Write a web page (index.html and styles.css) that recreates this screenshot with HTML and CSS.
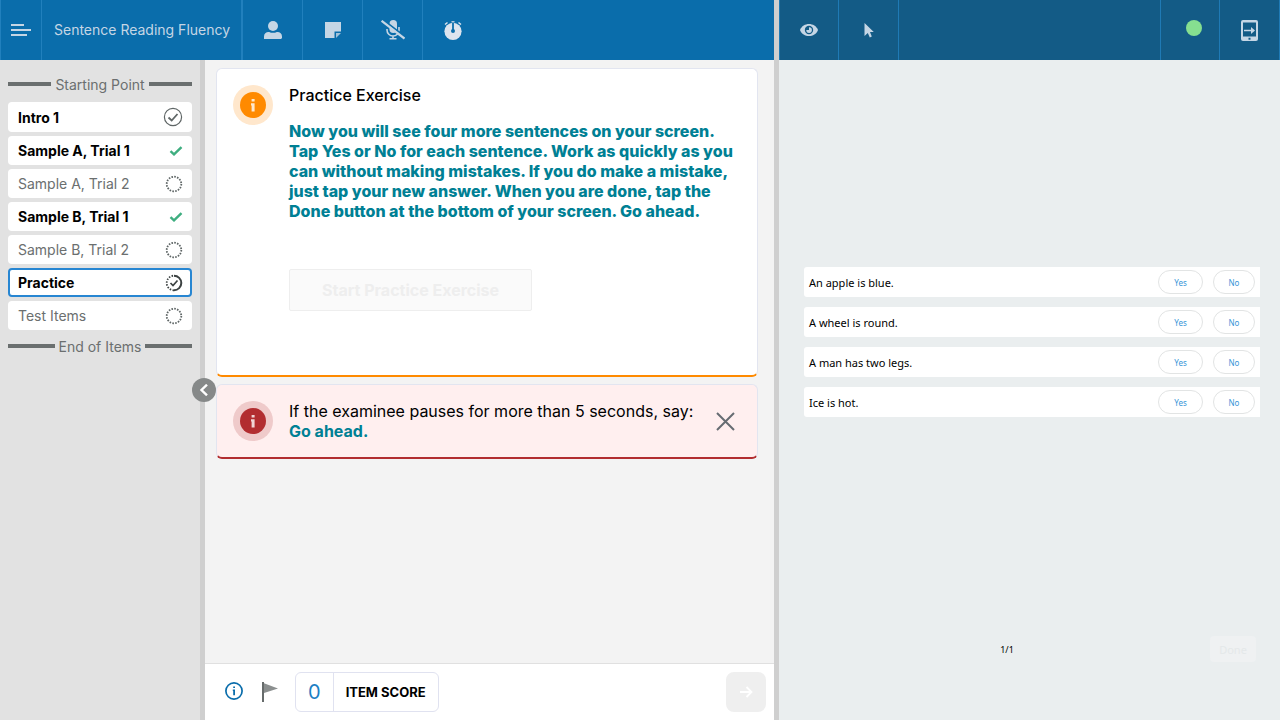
FILE: index.html
```html
<!DOCTYPE html>
<html lang="en">
<head>
<meta charset="utf-8">
<title>Sentence Reading Fluency</title>
<link rel="stylesheet" href="styles.css">
</head>
<body>
<svg class="defs" aria-hidden="true">
  <symbol id="todo" viewBox="0 0 18 18"><circle cx="9" cy="9" r="7.3" fill="none" stroke="#5f6666" stroke-width="1.8" stroke-dasharray="1.6 1.267"/></symbol>
  <symbol id="check" viewBox="0 0 14 10"><path d="M1.5 5.2 5 8.4 12.5 1.2" fill="none" stroke="#3fae80" stroke-width="2.4"/></symbol>
  <symbol id="info" viewBox="0 0 26 26"><circle cx="13" cy="13" r="13" fill="currentColor"/><path d="M11.6 7h3v2.6h-3zM11 11.2h3.6v8.4h-3v-6.2H11z" fill="#fff" opacity=".8"/></symbol>
</svg>
<div class="app">
  <section class="examiner">
    <header class="topbar">
      <button class="menu" aria-label="Menu"><svg width="20" height="12" viewBox="0 0 20 12"><path d="M0 1h13M0 6h20M0 11h16" stroke="currentColor" stroke-width="2"/></svg></button>
      <h1>Sentence Reading Fluency</h1>
      <button class="tool" aria-label="Examinee"><svg width="18" height="18" viewBox="0 0 18 18" fill="currentColor"><circle cx="9" cy="5" r="5"/><path d="M0 18v-2.5C0 12.500 2 11 4.500 11c1 0 2 .8 4.500.8s3.500-.8 4.500-.8c2.500 0 4.500 1.500 4.500 4.500V17l-1 1z"/></svg></button>
      <button class="tool" aria-label="Notes"><svg width="16" height="16" viewBox="0 0 16 16" fill="currentColor"><path d="M0 0h16v9.500h-6.500V16H0z"/><path d="M11 16v-5h5z" opacity=".8"/></svg></button>
      <button class="tool" aria-label="Microphone off"><svg width="24" height="20" viewBox="0 0 24 20" fill="none" stroke="currentColor"><rect x="8.500" y="0" width="7.500" height="13" rx="3.750" fill="currentColor" stroke="none"/><path d="M6 9v1a6 6 0 0 0 12 0V7M12 15.500V19M8.500 18.800h7" stroke-width="1.600"/><path d="M1.500-.5 24 16.800" stroke="#0a6dab" stroke-width="2"/><path d="M.6.8 23.500 18.600" stroke-width="2.200"/></svg></button>
      <button class="tool last" aria-label="Timer"><svg class="timer" width="18" height="19" viewBox="0 0 18 19"><circle cx="9" cy="10.300" r="8.600" fill="currentColor"/><path d="M1 3.500 3.500 1.500M17 3.500 14.500 1.500" stroke="currentColor" stroke-width="1.500"/><path d="M9 1v9" stroke="#0a6dab" stroke-width="1.800"/><path d="M7.500.8h3" stroke="currentColor" stroke-width="1.200"/><circle cx="9" cy="10" r="2" fill="#0a6dab"/></svg></button>
    </header>
    <div class="work">
      <nav class="sidebar" aria-label="Items">
        <div class="rule">Starting Point</div>
        <ul class="items">
          <li><button class="item strong">Intro 1<svg width="20" height="20" viewBox="0 0 20 20" fill="none" stroke="#5f6666"><circle cx="10" cy="10" r="8.600" stroke-width="1.200"/><path d="M5.500 10.500 8.700 13.500 14.500 7" stroke-width="1.800"/></svg></button></li>
          <li><button class="item strong">Sample A, Trial 1<svg width="14" height="10"><use href="#check"/></svg></button></li>
          <li><button class="item">Sample A, Trial 2<svg width="18" height="18"><use href="#todo"/></svg></button></li>
          <li><button class="item strong">Sample B, Trial 1<svg width="14" height="10"><use href="#check"/></svg></button></li>
          <li><button class="item">Sample B, Trial 2<svg width="18" height="18"><use href="#todo"/></svg></button></li>
          <li><button class="item strong current" aria-current="step">Practice<svg width="18" height="18" viewBox="0 0 18 18" fill="none" stroke="#3c4242"><path d="M9 16.300A7.300 7.300 0 0 1 9 1.700" stroke-width="1.800" stroke-dasharray="1.500 1.400"/><path d="M9 1.700A7.300 7.300 0 0 1 9 16.300" stroke-width="2"/><path d="M5.500 9 8 11.500 12.500 6.500" stroke-width="1.700"/></svg></button></li>
          <li><button class="item">Test Items<svg width="18" height="18"><use href="#todo"/></svg></button></li>
        </ul>
        <div class="rule">End of Items</div>
        <button class="collapse" aria-label="Collapse sidebar"><svg width="8" height="12" viewBox="0 0 8 12"><path d="M7 .7 1.500 6 7 11.300" fill="none" stroke="#fff" stroke-width="2.400"/></svg></button>
      </nav>
      <div class="content">
        <main class="cards">
          <article class="card prompt">
            <span class="badge"><svg width="26" height="26"><use href="#info"/></svg></span>
            <div class="body">
              <h2>Practice Exercise</h2>
              <p class="say">Now you will see four more sentences on your screen. Tap Yes or No for each sentence. Work as quickly as you can without making mistakes. If you do make a mistake, just tap your new answer. When you are done, tap the Done button at the bottom of your screen. Go ahead.</p>
              <button class="start" disabled>Start Practice Exercise</button>
            </div>
          </article>
          <article class="card alert">
            <span class="badge"><svg width="26" height="26"><use href="#info"/></svg></span>
            <div class="body">
              <p>If the examinee pauses for more than 5 seconds, say:</p>
              <p class="say">Go ahead.</p>
            </div>
            <button class="close" aria-label="Dismiss"><svg width="19" height="19" viewBox="0 0 19 19"><path d="M1 1l17 17M18 1 1 18" stroke="#666c72" stroke-width="2"/></svg></button>
          </article>
        </main>
        <footer class="bottombar">
          <button class="icon" aria-label="Information"><svg width="18" height="18" viewBox="0 0 18 18"><circle cx="9" cy="9" r="8.100" fill="none" stroke="#0a6dab" stroke-width="1.700"/><path d="M8.200 4.500h1.800v1.600H8.200zM7.800 7.500H10v5.700H8.200V9h-.4z" fill="#0a6dab"/></svg></button>
          <button class="icon flag" aria-label="Flag"><svg width="16" height="20" viewBox="0 0 16 20"><path d="M1 0v20" stroke="#666b6b" stroke-width="2"/><path d="M2 1.300 16 6.500 2 11z" fill="#8b8f8f"/></svg></button>
          <div class="score"><output>0</output><span>ITEM SCORE</span></div>
          <button class="next" aria-label="Next" disabled><svg width="13" height="12" viewBox="0 0 13 12"><path d="M0 6h11.500M6.500 1l5 5-5 5" fill="none" stroke="#fff" stroke-width="1.800"/></svg></button>
        </footer>
      </div>
    </div>
  </section>
  <div class="divider"></div>
  <section class="examinee">
    <header class="topbar dark">
      <button class="tool" aria-label="View"><svg width="18" height="12" viewBox="0 0 18 12"><path d="M0 6C3-2 15-2 18 6 15 14 3 14 0 6z" fill="currentColor"/><circle cx="9" cy="6" r="4.200" fill="#135b86"/><path d="M9 6V3.300A2.800 2.800 0 1 1 6.300 6z" fill="currentColor"/></svg></button>
      <button class="tool" aria-label="Pointer"><svg width="10" height="15" viewBox="0 0 10 15"><path d="M.5 0 9.800 9H6l1.800 4.500-2 1L3.800 10 .5 13z" fill="currentColor"/></svg></button>
      <span class="status"><i class="dot"></i></span>
      <button class="tool" aria-label="Send to device"><svg width="17" height="21" viewBox="0 0 17 21"><path fill-rule="evenodd" d="M2 0h13q2 0 2 2v17q0 2-2 2H2q-2 0-2-2V2Q0 0 2 0zM2 2.500v14h13v-14zM7.500 17.700v2h2v-2z" fill="currentColor"/><path d="M3 10.500h8" stroke="currentColor" stroke-width="1.500"/><path d="M10 7l4 3.500-4 3.500z" fill="currentColor"/></svg></button>
    </header>
    <div class="stage">
      <ul class="questions">
        <li>An apple is blue.<button class="yes">Yes</button><button>No</button></li>
        <li>A wheel is round.<button class="yes">Yes</button><button>No</button></li>
        <li>A man has two legs.<button class="yes">Yes</button><button>No</button></li>
        <li>Ice is hot.<button class="yes">Yes</button><button>No</button></li>
      </ul>
      <div class="pager"><span>1/1</span><button class="done" disabled>Done</button></div>
    </div>
  </section>
</div>
</body>
</html>
```
FILE: styles.css
```css
* { box-sizing: border-box; }
body { margin: 0; font-family: Inter, "Liberation Sans", sans-serif; color: #000; }
button { font: inherit; color: inherit; background: none; border: 0; padding: 0; }
h1, h2, p, ul { margin: 0; padding: 0; font-weight: 400; list-style: none; }
svg { display: block; flex: none; }
.defs { position: absolute; width: 0; height: 0; }

.app { display: grid; grid-template-columns: minmax(0, 774fr) 5px minmax(0, 501fr); min-height: 100vh; }
.divider { background: #cfcfcf; }
.examiner, .examinee { display: flex; flex-direction: column; }

.topbar { display: flex; height: 60px; background: #0a6dab; color: #c5d6e5; }
.topbar button { display: grid; place-items: center; border-right: 1px solid #2180bd; }
.topbar .menu { width: 42px; border-left: 1px solid #2180bd; }
.topbar h1 { display: flex; align-items: center; padding: 0 11px 0 12px; font-size: 14px; line-height: 20px; white-space: nowrap; border-right: 2px solid #2180bd; }
.topbar .tool { width: 60px; }
.topbar .last { border-right: 0; }
.timer { color: #dce4ee; }
.dark { background: #135b86; border-left: 1px solid #1f7ab5; }
.dark .tool { border-color: #1f7ab5; }
.dark .tool:first-child { width: 59px; }
.status { display: grid; place-items: center; width: 60px; margin-left: auto; padding: 0 0 4px 8px; border: solid #1f7ab5; border-width: 0 1px; }
.dot { width: 16px; height: 16px; border-radius: 50%; background: #86df90; }

.work { display: flex; flex: 1; }
.sidebar { position: relative; width: 205px; flex: none; padding: 12px 8px 0; background: #e2e2e2; border-right: 5px solid #cfcfcf; font-size: 14px; line-height: 19px; color: #6b6f6f; }
.rule { display: flex; align-items: center; gap: 4px; height: 24px; }
.rule::before, .rule::after { content: ""; flex: 1; height: 4px; background: #6a6f6f; }
.items { display: flex; flex-direction: column; gap: 4px; margin: 6px 0 4px; }
.item { display: flex; align-items: center; justify-content: space-between; width: 100%; min-height: 29px; padding: 5px 9px 5px 10px; background: #fff; border-radius: 4px; }
.strong { font-weight: 700; color: #000; }
.current { padding: 3px 7px 3px 8px; border: 2px solid #2786d2; }
.collapse { position: absolute; top: 318px; right: -16px; display: grid; place-items: center; width: 24px; height: 24px; border-radius: 50%; background: #868989; }

.content { display: flex; flex-direction: column; flex: 1; min-width: 0; background: #f3f3f3; }
.cards { display: flex; flex-direction: column; gap: 7px; flex: 1; padding: 8px 16px 8px 11px; font-size: 16px; line-height: 20px; }
.card { display: flex; gap: 16px; padding: 16px; background: #fff; border: 1px solid #e2e5f0; border-bottom-width: 2px; border-radius: 6px; }
.badge { display: grid; place-items: center; flex: none; width: 40px; height: 40px; border-radius: 50%; }
.body { flex: 1; }
.prompt { padding-bottom: 64px; border-bottom-color: #ff8a00; }
.prompt .badge { color: #ff8a00; background: #ffe7cc; }
.prompt h2 { font-size: 16px; font-weight: 500; }
.say { font-weight: 700; color: #008094; }
.prompt .say { margin-top: 16px; font-weight: 800; }
.start { margin-top: 48px; padding: 10px 32px; border: 1px solid #eee; border-radius: 2px; background: #fafafa; color: #eee; font-weight: 700; }
.alert { background: #ffefef; border-bottom-color: #b22d30; }
.alert .badge { color: #b22d30; background: #efcaca; }
.close { padding: 0 6px; }

.bottombar { display: flex; align-items: center; height: 57px; padding: 0 8px 0 20px; background: #fff; border-top: 1px solid #e0e0e0; }
.icon { display: grid; place-items: center; width: 18px; height: 20px; }
.flag { margin: 0 16px 0 18px; }
.bottombar .icon:first-child { margin-bottom: 2px; }
.score { display: flex; height: 40px; border: 1px solid #e0e2f0; border-radius: 6px; }
.score > * { display: grid; place-items: center; padding: 0 12px; }
.score output { border-right: 1px solid #e0e2f0; font-size: 20px; color: #1c7fc4; }
.score span { font-size: 13px; font-weight: 700; }
.next { display: grid; place-items: center; width: 40px; height: 40px; margin-left: auto; border-radius: 8px; background: #efefef; }

.stage { display: flex; flex-direction: column; flex: 1; padding: 207px 20px 58px 25px; background: #eaeeef; font-family: "Noto Sans", sans-serif; font-size: 11px; }
.questions { display: flex; flex-direction: column; gap: 10px; }
.questions li { display: flex; align-items: center; gap: 10px; height: 30px; padding: 0 5px; background: #fff; border-radius: 3px 0 0 3px; }
.questions button { width: 42px; height: 24px; border: 1px solid #e2e4e4; border-radius: 12px; font-size: 8px; color: #3795d8; }
.questions .yes { width: 45px; margin-left: auto; }
.pager { display: flex; align-items: center; margin-top: auto; padding-right: 4px; font-size: 9px; }
.pager span { flex: 1; text-align: center; }
.done { width: 46px; height: 26px; border-radius: 4px; background: #eff1f2; color: #e4e8e9; font-size: 11px; }
```
